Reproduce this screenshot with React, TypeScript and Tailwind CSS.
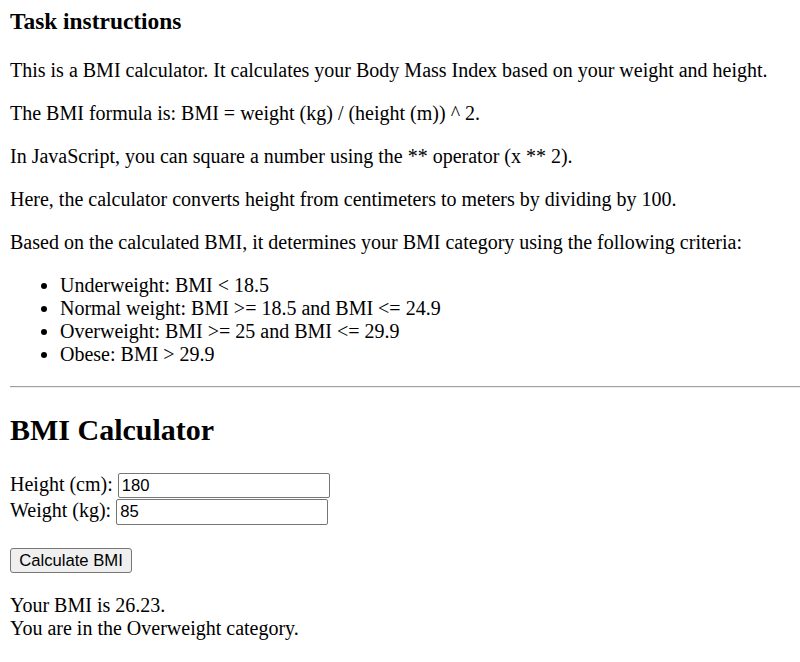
import React from "react";

export default function App() {
  return (
    <div className="min-h-screen bg-white text-black px-[10px] pt-[8px] font-['Liberation_Serif',serif] text-[20px] leading-[23px]">
      <h3 className="text-[23.4px] leading-[27px] font-bold mb-[24px]">Task instructions</h3>
      <p className="mb-[20px]">This is a BMI calculator. It calculates your Body Mass Index based on your weight and height.</p>
      <p className="mb-[20px]">The BMI formula is: BMI = weight (kg) / (height (m)) ^ 2.</p>
      <p className="mb-[20px]">In JavaScript, you can square a number using the ** operator (x ** 2).</p>
      <p className="mb-[20px]">Here, the calculator converts height from centimeters to meters by dividing by 100.</p>
      <p className="mb-[20px]">Based on the calculated BMI, it determines your BMI category using the following criteria:</p>
      <ul className="list-disc pl-[50px]">
        <li>Underweight: BMI &lt; 18.5</li>
        <li>Normal weight: BMI &gt;= 18.5 and BMI &lt;= 24.9</li>
        <li>Overweight: BMI &gt;= 25 and BMI &lt;= 29.9</li>
        <li>Obese: BMI &gt; 29.9</li>
      </ul>
      <hr className="mt-[20px] mr-[-10px] h-0 border-0 border-t border-t-[#a0a0a0] border-b border-b-[#eeeeee]" />
      <h2 className="mt-[25px] text-[30px] leading-[34.5px] font-bold">BMI Calculator</h2>
      <div className="mt-[25px] flex flex-col">
        <div className="flex items-center h-[26px]">
          <label className="-mt-[2px]">Height (cm):</label>
          <input
            type="text"
            defaultValue="180"
            className="ml-[5px] w-[212px] h-[25px] border border-[#767676] rounded-[2px] px-[3px] font-['Liberation_Sans',Arial,sans-serif] text-[16.67px] text-black bg-white outline-none"
          />
        </div>
        <div className="flex items-center h-[26px]">
          <label className="-mt-[2px]">Weight (kg):</label>
          <input
            type="text"
            defaultValue="85"
            className="ml-[5px] w-[212px] h-[26px] border border-[#767676] rounded-[2px] px-[3px] font-['Liberation_Sans',Arial,sans-serif] text-[16.67px] text-black bg-white outline-none"
          />
        </div>
      </div>
      <div className="mt-[23px]">
        <button className="w-[122px] h-[25px] bg-[#efefef] border border-[#767676] rounded-[3px] font-['Liberation_Sans',Arial,sans-serif] text-[16.67px] leading-[20px] text-black">
          Calculate BMI
        </button>
      </div>
      <div className="mt-[21px]">
        <div>Your BMI is 26.23.</div>
        <div>You are in the Overweight category.</div>
      </div>
    </div>
  );
}
